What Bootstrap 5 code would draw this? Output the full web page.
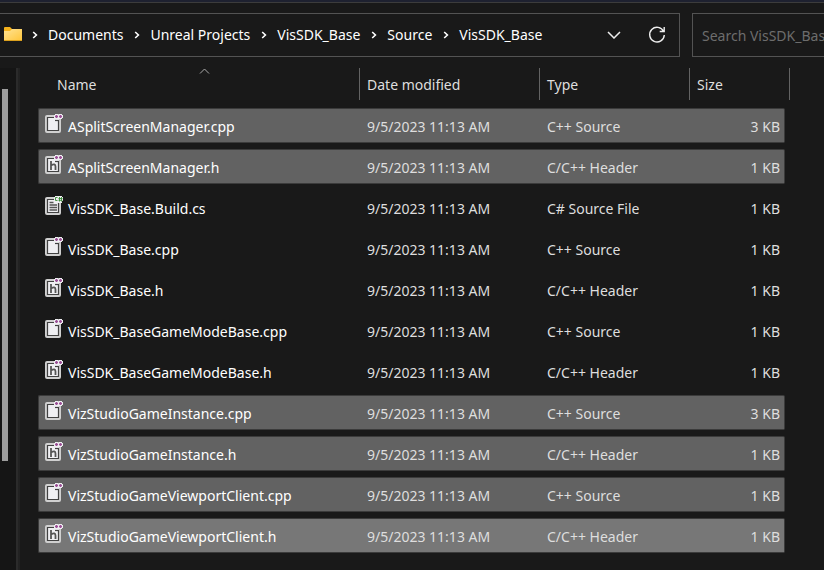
<!DOCTYPE html>
<html lang="en">
<head>
<meta charset="utf-8">
<meta name="viewport" content="width=device-width, initial-scale=1">
<title>VisSDK_Base</title>
<link rel="stylesheet" href="https://cdn.jsdelivr.net/npm/bootstrap@5.3.0/dist/css/bootstrap.min.css">
<style>
body{background:#191919;color:#fff;font-family:"Noto Sans","Open Sans",sans-serif;font-size:14px;line-height:20px;min-height:100vh}
.title-edge{height:3px;background:#1e2130;border-bottom:1px solid #3c3c3c}
.toolbar{gap:12px;padding-top:10px}
.address{height:44px;border:1px solid #535353;border-left:0;padding-left:4px;min-width:0}
.crumbs{font-size:14px}
.crumbs a{color:#fff;text-decoration:none}
.crumbs li{display:flex;align-items:center}
.crumbs li+li{margin-left:1px}
.crumbs .sep{margin:0 10px}
.tool{background:none;border:0;padding:0;width:20px;height:20px;display:flex;align-items:center;justify-content:center}
.tools{gap:23px;padding-right:12px}
.search{width:132px;height:44px;border:1px solid #535353;border-right:0;background:#191919;color:#fff;padding:0 0 0 9px;font:inherit;outline:0}
.search::placeholder{color:#6d6d6d;opacity:1}
.main{padding-top:11px}
.nav-strip{width:20px;border-right:2px solid #222;padding:21px 0 0 2px;background:linear-gradient(90deg,#151515 0 16px,#2b2b2b 16px)}
.thumb{width:6px;height:372px;background:#9d9d9d}
.files{margin-right:39px;margin-left:18px;min-width:0}
.files table{table-layout:fixed;width:100%;border-collapse:separate;border-spacing:0 6px;margin-top:-6px}
.files th{font-weight:400;padding:0 0 2px;color:#dedede;position:relative}
.files th div{height:32px;padding:7px 0 5px 7px;border-left:1px solid #636363}
.files th:first-child div{border:0;padding-left:19px}
.files th:last-child::after{content:"";position:absolute;right:-5px;top:0;width:1px;height:32px;background:#636363}
.files td{height:35px;padding:2px 0 0 8px;border:solid transparent;border-width:1px 0;color:#dedede;white-space:nowrap}
.files td:first-child{padding-left:6px;color:#fff}
.files td:last-child{padding-right:5px;text-align:right}
.files td svg{margin-right:4px;margin-top:-8px}
.files .picked td{background:#626262;border-color:#3b3b3b}
.files .picked td:first-child{border-left:1px solid #3b3b3b;border-radius:2px 0 0 2px;padding-left:5px}
.files .picked td:last-child{border-right:1px solid #3b3b3b;border-radius:0 2px 2px 0;padding-right:4px}
.files .focused td{background:#777}
.sort{position:absolute;left:50%;top:0}
.c-date{width:180px}.c-type{width:150px}.c-size{width:96px}
</style>
<script src="https://cdn.jsdelivr.net/npm/bootstrap@5.3.0/dist/js/bootstrap.bundle.min.js"></script>
</head>
<body class="d-flex flex-column overflow-hidden">
<svg class="d-none">
<symbol id="page" viewBox="0 0 20 20"><rect x="1" y="1" width="16" height="18" rx="2" fill="#d0d0d0"/><path d="M3.500 3.500h11v13h-11z" fill="#efeff2" stroke="#424242" stroke-width="1.200"/></symbol>
<symbol id="plus" viewBox="0 0 20 20"><path d="M10 1h1V0h3l.5.5L15 0h3v1h1v3h-1v1h-3v1h-4V5h-1z" fill="#efeff2"/><path d="M11 2.500h3M12.500 1v3M15 2.500h3M16.500 1v3" stroke="#9b4f96" stroke-width="1.400"/><path d="M11 6.500h4" stroke="#424242" stroke-width="1.200"/></symbol>
<symbol id="cpp" viewBox="0 0 20 20"><use href="#page"/><use href="#plus"/></symbol>
<symbol id="hdr" viewBox="0 0 20 20"><use href="#page"/><use href="#plus"/><path d="M7 6v9M7 10.500q4.500-2.500 4.500 1v3.500" fill="none" stroke="#555" stroke-width="1.800"/></symbol>
<symbol id="cs" viewBox="0 0 20 20"><use href="#page"/><path d="M5.500 6.500h4M5.500 9h7.500M5.500 11.500h7.500M5.500 14h7.500" stroke="#555" stroke-width="1.300"/><path d="M10 1h1V0h7v1h1v4h-1v2h-7V5h-1z" fill="#efeff2"/><path d="M13.500 1.500h-2v3h2M14.500 2.500h4M14.500 4.300h4M15.500 1v4.500M17.500 1v4.500" fill="none" stroke="#388a34" stroke-width=".9"/></symbol>
<symbol id="chev" viewBox="0 0 6 8"><path d="M1.200 1L4.400 4L1.200 7" fill="none" stroke="#fff" stroke-width="1.600"/></symbol>
</svg>
<div class="title-edge"></div>
<header class="toolbar d-flex">
<div class="address d-flex align-items-center flex-grow-1">
<svg width="18" height="16" viewBox="0 0 18 16" aria-hidden="true"><defs><linearGradient id="fold" x2="1" y2="1"><stop stop-color="#ffe394"/><stop offset="1" stop-color="#ffc63c"/></linearGradient></defs><path d="M0 1q0-1 1-1h5l2 2h10v10H0z" fill="#f5b21c"/><path d="M0 4h6l2-2h10v11H0z" fill="url(#fold)"/><path d="M0 13.500h18" stroke="#dba01d"/></svg>
<nav aria-label="Address" class="flex-grow-1"><ol class="crumbs list-unstyled d-flex mb-0">
<li><svg class="sep" width="6" height="8"><use href="#chev"/></svg><a href="#">Documents</a></li>
<li><svg class="sep" width="6" height="8"><use href="#chev"/></svg><a href="#">Unreal Projects</a></li>
<li><svg class="sep" width="6" height="8"><use href="#chev"/></svg><a href="#">VisSDK_Base</a></li>
<li><svg class="sep" width="6" height="8"><use href="#chev"/></svg><a href="#">Source</a></li>
<li><svg class="sep" width="6" height="8"><use href="#chev"/></svg><a href="#" aria-current="page">VisSDK_Base</a></li>
</ol></nav>
<div class="tools d-flex">
<button class="tool" type="button" aria-label="Previous locations"><svg width="14" height="8" viewBox="0 0 14 8"><path d="M1 1l6 6l6-6" fill="none" stroke="#eee" stroke-width="1.500"/></svg></button>
<button class="tool" type="button" aria-label="Refresh"><svg width="18" height="18" viewBox="0 0 18 18"><path d="M15.600 5.500A7.300 7.300 0 1 0 16.300 9M16.200 1v4.500h-4.500" fill="none" stroke="#eee" stroke-width="1.400"/></svg></button>
</div>
</div>
<input class="search flex-shrink-0" type="text" aria-label="Search" placeholder="Search VisSDK_Base">
</header>
<main class="main d-flex flex-grow-1">
<aside class="nav-strip flex-shrink-0"><div class="thumb"></div></aside>
<section class="files flex-grow-1">
<table>
<colgroup><col><col class="c-date"><col class="c-type"><col class="c-size"></colgroup>
<thead><tr><th scope="col"><div>Name</div><svg class="sort" width="11" height="6" viewBox="0 0 11 6"><path d="M1 5.500L5.500 1L10 5.500" fill="none" stroke="#aaa"/></svg></th><th scope="col"><div>Date modified</div></th><th scope="col"><div>Type</div></th><th scope="col"><div>Size</div></th></tr></thead>
<tbody>
<tr class="picked"><td><svg width="20" height="20"><use href="#cpp"/></svg>ASplitScreenManager.cpp</td><td>9/5/2023 11:13 AM</td><td>C++ Source</td><td>3 KB</td></tr>
<tr class="picked"><td><svg width="20" height="20"><use href="#hdr"/></svg>ASplitScreenManager.h</td><td>9/5/2023 11:13 AM</td><td>C/C++ Header</td><td>1 KB</td></tr>
<tr><td><svg width="20" height="20"><use href="#cs"/></svg>VisSDK_Base.Build.cs</td><td>9/5/2023 11:13 AM</td><td>C# Source File</td><td>1 KB</td></tr>
<tr><td><svg width="20" height="20"><use href="#cpp"/></svg>VisSDK_Base.cpp</td><td>9/5/2023 11:13 AM</td><td>C++ Source</td><td>1 KB</td></tr>
<tr><td><svg width="20" height="20"><use href="#hdr"/></svg>VisSDK_Base.h</td><td>9/5/2023 11:13 AM</td><td>C/C++ Header</td><td>1 KB</td></tr>
<tr><td><svg width="20" height="20"><use href="#cpp"/></svg>VisSDK_BaseGameModeBase.cpp</td><td>9/5/2023 11:13 AM</td><td>C++ Source</td><td>1 KB</td></tr>
<tr><td><svg width="20" height="20"><use href="#hdr"/></svg>VisSDK_BaseGameModeBase.h</td><td>9/5/2023 11:13 AM</td><td>C/C++ Header</td><td>1 KB</td></tr>
<tr class="picked"><td><svg width="20" height="20"><use href="#cpp"/></svg>VizStudioGameInstance.cpp</td><td>9/5/2023 11:13 AM</td><td>C++ Source</td><td>3 KB</td></tr>
<tr class="picked"><td><svg width="20" height="20"><use href="#hdr"/></svg>VizStudioGameInstance.h</td><td>9/5/2023 11:13 AM</td><td>C/C++ Header</td><td>1 KB</td></tr>
<tr class="picked"><td><svg width="20" height="20"><use href="#cpp"/></svg>VizStudioGameViewportClient.cpp</td><td>9/5/2023 11:13 AM</td><td>C++ Source</td><td>1 KB</td></tr>
<tr class="picked focused"><td><svg width="20" height="20"><use href="#hdr"/></svg>VizStudioGameViewportClient.h</td><td>9/5/2023 11:13 AM</td><td>C/C++ Header</td><td>1 KB</td></tr>
</tbody>
</table>
</section>
</main>
</body>
</html>
